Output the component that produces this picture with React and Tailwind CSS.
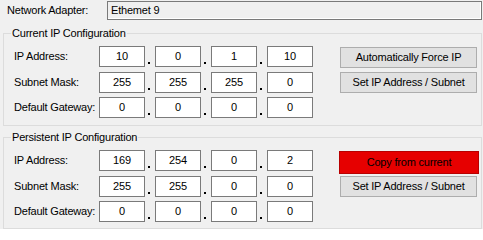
const Box = ({ v }) => (
  <div className="w-[46px] h-[21px] border border-[#7a7a7a] bg-white flex items-center justify-center">
    {v}
  </div>
);

const Dot = () => (
  <div className="w-[10px] h-[21px] flex items-end pl-[3px] pb-[3px]">
    <div className="w-[2px] h-[2px] bg-black" />
  </div>
);

const IpRow = ({ label, values, className = "" }) => (
  <div className={"flex items-center h-[21px] " + className}>
    <div className="w-[85px]">{label}</div>
    <Box v={values[0]} />
    <Dot />
    <Box v={values[1]} />
    <Dot />
    <Box v={values[2]} />
    <Dot />
    <Box v={values[3]} />
  </div>
);

const Button = ({ children, className = "" }) => (
  <button
    className={
      "w-[137px] h-[21px] border border-[#adadad] bg-[#e1e1e1] flex items-center justify-center " +
      className
    }
  >
    {children}
  </button>
);

function Group({ title, className = "", children }) {
  return (
    <div className={"relative ml-[3px] w-[479px] border border-[#dcdcdc] " + className}>
      <span className="absolute left-[7px] top-[-8px] leading-[14px] px-[1px] bg-[#f0f0f0]">
        {title}
      </span>
      {children}
    </div>
  );
}

export default function App() {
  return (
    <div className="w-[483px] h-[229px] overflow-hidden bg-[#f0f0f0] text-black text-[11px] tracking-[-0.2px] font-['Liberation_Sans',Arial,sans-serif]">
      <div className="flex items-center pl-[7px] pt-[1px]">
        <div className="w-[100px]">Network Adapter:</div>
        <div className="w-[375px] h-[19px] border border-[#7a7a7a] bg-[#f0f0f0] flex items-center pl-[3px] shadow-[inset_-1px_-1px_0_#ffffff]">
          Ethemet 9
        </div>
      </div>

      <Group title="Current IP Configuration" className="mt-[13px]">
        <div className="flex pl-[10px] pt-[12px] pb-[7px]">
          <div className="flex flex-col">
            <IpRow label="IP Address:" values={["10", "0", "1", "10"]} />
            <IpRow label="Subnet Mask:" values={["255", "255", "255", "0"]} className="mt-[5px]" />
            <IpRow label="Default Gateway:" values={["0", "0", "0", "0"]} className="mt-[4px]" />
          </div>
          <div className="flex flex-col ml-[27px] pt-[1px]">
            <Button>Automatically Force IP</Button>
            <Button className="mt-[4px]">Set IP Address / Subnet</Button>
          </div>
        </div>
      </Group>

      <Group title="Persistent IP Configuration" className="mt-[11px]">
        <div className="flex pl-[10px] pt-[12px] pb-[6px]">
          <div className="flex flex-col">
            <IpRow label="IP Address:" values={["169", "254", "0", "2"]} />
            <IpRow label="Subnet Mask:" values={["255", "255", "0", "0"]} className="mt-[5px]" />
            <IpRow label="Default Gateway:" values={["0", "0", "0", "0"]} className="mt-[4px]" />
          </div>
          <div className="flex flex-col ml-[26px] pt-[1px]">
            <button className="w-[140px] h-[23px] border border-[#b80000] bg-[#e60000] flex items-center justify-center">
              Copy from current
            </button>
            <Button className="mt-[2px] ml-[1px]">Set IP Address / Subnet</Button>
          </div>
        </div>
      </Group>
    </div>
  );
}
